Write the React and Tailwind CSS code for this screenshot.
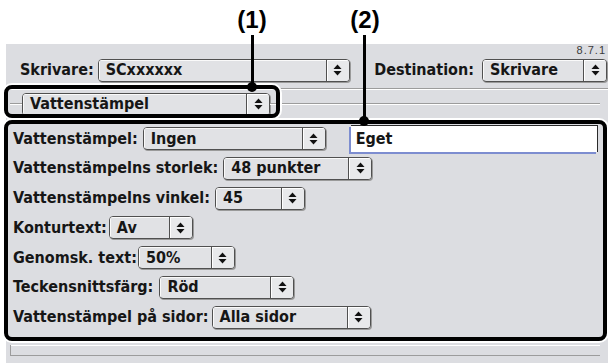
import React from "react";

// Mac OS 9 style print dialog, "Vattenstämpel" panel, with callouts (1) and (2)

const ui = "font-['DejaVu_Sans_Condensed','DejaVu_Sans',sans-serif] font-bold text-[#161616] text-[16px] leading-none";

function Arrows() {
  return (
    <svg width="9" height="12" viewBox="0 0 9 12">
      <path d="M4.5 0.5 L8.5 5 L0.5 5 Z" fill="#111" />
      <path d="M0.5 7 L8.5 7 L4.5 11.5 Z" fill="#111" />
    </svg>
  );
}

function Popup({ w, children }) {
  return (
    <div className={`flex h-[23px] shrink-0 rounded-[4px] border border-[#505050] bg-[#e1e2e5] shadow-[1px_1px_0_#9a9a9a] overflow-hidden ${w}`}>
      <div className="flex flex-1 items-center pl-[7px] shadow-[inset_1px_1px_0_#fafafa] whitespace-nowrap">
        {children}
      </div>
      <div className="flex w-[23px] items-center justify-center border-l border-[#505050] bg-[#e8e9eb] shadow-[inset_1px_1px_0_#ffffff]">
        <Arrows />
      </div>
    </div>
  );
}

function Row({ label, w, value, gap = "gap-[5px]", children }) {
  return (
    <div className={`flex h-[23px] items-center ${gap}`}>
      <span className="whitespace-nowrap">{label}</span>
      <Popup w={w}>{value}</Popup>
      {children}
    </div>
  );
}

export default function App() {
  return (
    <div className={`relative h-[363px] w-[608px] overflow-hidden bg-white ${ui}`}>
      {/* callout labels */}
      <div className="h-[44px]" />

      {/* dialog panel */}
      <div className="ml-[6px] flex h-[319px] flex-col bg-[#dcdde1]">
        <div className="flex h-[12px] justify-end pr-[2px] pt-[1px] font-['Liberation_Sans',sans-serif] text-[11px] font-normal tracking-[1px] text-[#3a3a3a]">
          8.7.1
        </div>

        <div className="mt-[3px] flex h-[22px] items-center pl-[14px] pr-[1px]">
          <span>Skrivare:</span>
          <div className="ml-[4px]">
            <Popup w="w-[252px]">SCxxxxxx</Popup>
          </div>
          <span className="ml-auto">Destination:</span>
          <div className="ml-[8px]">
            <Popup w="w-[125px]">Skrivare</Popup>
          </div>
        </div>

        <div className="mt-[7px] h-[2px] border-t border-b border-t-[#9c9c9c] border-b-white" />

        <div className="mt-[3px] flex h-[22px] items-center pr-[8px]">
          <div className="ml-[4px] h-[2px] w-[12px] border-t border-b border-t-[#9c9c9c] border-b-white" />
          <Popup w="w-[248px]">Vattenstämpel</Popup>
          <div className="h-[2px] flex-1 border-t border-b border-t-[#9c9c9c] border-b-white" />
        </div>

        <div className="mt-[12px] flex flex-col gap-[6.8px] pl-[7px]">
          <Row label="Vattenstämpel:" w="w-[183px]" value="Ingen">
            <div className="ml-[20px] flex h-[27px] w-[247px] items-center border-t border-r border-[#2a2a2a] bg-white pl-[5px] shadow-[-2px_2px_0_#7d8dd0]">
              Eget
            </div>
          </Row>
          <Row label="Vattenstämpelns storlek:" w="w-[149px]" value="48 punkter" />
          <Row label="Vattenstämpelns vinkel:" w="w-[90px]" value="45" />
          <Row label="Konturtext:" w="w-[84px]" value="Av" gap="gap-[2px]" />
          <Row label="Genomsk. text:" w="w-[97px]" value="50%" gap="gap-[1px]" />
          <Row label="Teckensnittsfärg:" w="w-[135px]" value="Röd" gap="gap-[6px]" />
          <Row label="Vattenstämpel på sidor:" w="w-[159px]" value="Alla sidor" gap="gap-[3px]" />
        </div>

        <div className="ml-[4px] mr-[8px] mt-auto mb-[7px] h-[11px] border-l border-b border-[#9c9c9c] shadow-[inset_0_1px_0_#ffffff]" />
      </div>

      {/* callout frames */}
      <div className="absolute left-[4px] top-[85px] h-[33px] w-[276px] rounded-[8px] border-4 border-black shadow-[0_0_0_2px_#ffffff]" />
      <div className="absolute left-[4px] top-[120px] h-[221px] w-[603px] rounded-[8px] border-4 border-black shadow-[0_0_0_2px_#ffffff]" />

      {/* callout pointers */}
      <div className="absolute left-[232px] top-[8px] w-[40px] text-center font-['Liberation_Sans',sans-serif] text-[24px] font-bold text-black">(1)</div>
      <div className="absolute left-[345px] top-[8px] w-[40px] text-center font-['Liberation_Sans',sans-serif] text-[24px] font-bold text-black">(2)</div>
      <div className="absolute left-[251px] top-[35px] h-[50px] w-[3px] bg-black" />
      <div className="absolute left-[247px] top-[82px] h-[10px] w-[10px] rounded-full bg-black" />
      <div className="absolute left-[363px] top-[35px] h-[84px] w-[3px] bg-black" />
      <div className="absolute left-[359px] top-[116px] h-[10px] w-[10px] rounded-full bg-black" />
    </div>
  );
}
